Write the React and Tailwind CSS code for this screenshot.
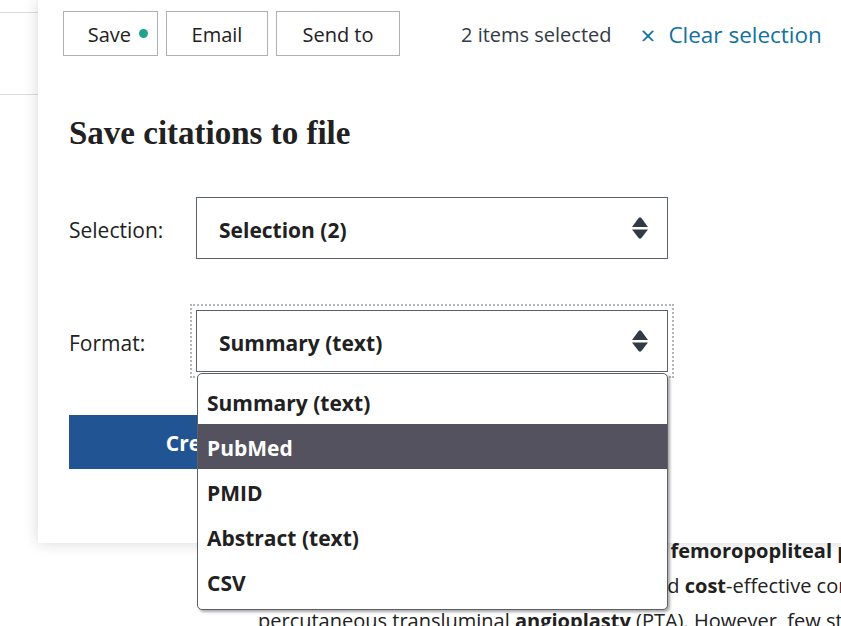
import React from "react";

/* up/down select arrows */
const SortArrows = () => (
  <svg width="16" height="22" viewBox="0 0 16 22" fill="#323a45">
    <path d="M6.6 0.9 Q8 -0.4 9.4 0.9 L16 10 L0 10 Z" />
    <path d="M0 12.5 L16 12.5 L9.4 21.1 Q8 22.4 6.6 21.1 Z" />
  </svg>
);

const FORMATS = ["Summary (text)", "PubMed", "PMID", "Abstract (text)", "CSV"];

const App = () => {
  return (
    <div className="relative w-[841px] h-[626px] overflow-hidden bg-white text-[#212121] font-['Open_Sans',sans-serif]">
      {/* ───────── page behind the dialog ───────── */}
      <div className="h-[12px]" />
      <div className="h-[83px] border-y border-[#dcdcdc]" />
      <div className="mt-[438px] pl-[258px] text-[20px] leading-[35px] whitespace-nowrap">
        <div className="font-bold">Paclitaxel-coated balloon angioplasty for femoropopliteal peripheral disease</div>
        <div>Stent placement provides a durable, safe and <b>cost</b>-effective compared with</div>
        <div>
          percutaneous transluminal <b>angioplasty</b> (PTA). However, few studies have
        </div>
      </div>

      {/* ───────── action panel ───────── */}
      <div className="absolute left-[38px] top-0 right-[-40px] h-[543px] bg-white shadow-[0_0_14px_rgba(0,0,0,0.16)]">
        {/* toolbar */}
        <div className="flex items-center pl-[25px] pt-[11px] text-[20px]">
          <button className="flex h-[45px] w-[95px] items-center justify-end gap-[8px] border border-[#aeb0b5] pr-[9px] pt-[3px]">
            Save
            <span className="mb-[3px] h-[9px] w-[9px] rounded-full bg-[#20a38b]" />
          </button>
          <button className="ml-[8px] h-[45px] w-[102px] border border-[#aeb0b5] pt-[3px]">Email</button>
          <button className="ml-[8px] h-[45px] w-[124px] border border-[#aeb0b5] pt-[3px]">Send to</button>
          <span className="ml-[61px] pt-[3px] text-[#323a45]">2 items selected</span>
          <button className="ml-[29px] flex items-center gap-[13px] pt-[3px] text-[22.5px] text-[#11729e]">
            <span className="text-[26px] leading-none">×</span>
            Clear selection
          </button>
        </div>

        {/* form */}
        <div className="pl-[31px] text-[21px]">
          <h2 className="mt-[57px] text-[33px] leading-[40px] font-bold font-['Liberation_Serif',serif]">
            Save citations to file
          </h2>

          <div className="mt-[44px] flex items-center">
            <label className="w-[127px] pt-[6px]">Selection:</label>
            <div className="flex h-[62px] w-[472px] items-center justify-between border border-[#5b616b] pl-[22px] pr-[19px] font-bold">
              <span className="pt-[5px]">Selection (2)</span>
              <SortArrows />
            </div>
          </div>

          <div className="mt-[51px] flex items-center">
            <label className="w-[127px] pt-[6px]">Format:</label>
            <div className="relative">
              <div className="flex h-[62px] w-[472px] items-center justify-between border border-[#5b616b] pl-[22px] pr-[19px] font-bold outline-2 outline-dotted outline-offset-[4px] outline-[#b5b6ba]">
                <span className="pt-[5px]">Summary (text)</span>
                <SortArrows />
              </div>

              {/* open dropdown */}
              <ul className="absolute left-[1px] top-[63px] z-10 w-[471px] rounded-[5px] border border-[#5f5f69] bg-white py-[5px] font-bold shadow-[2px_2px_3px_rgba(0,0,0,0.35)]">
                {FORMATS.map((f) => (
                  <li
                    key={f}
                    className={
                      f === "PubMed"
                        ? "flex h-[45px] items-center bg-[#53525e] pl-[9px] pt-[4px] text-white"
                        : "flex h-[45px] items-center pl-[9px] pt-[4px]"
                    }
                  >
                    {f}
                  </li>
                ))}
              </ul>
            </div>
          </div>

          <button className="mt-[43px] h-[54px] w-[302px] bg-[#205493] pt-[3px] font-bold text-white">
            Create file
          </button>
        </div>
      </div>
    </div>
  );
};

export default App;
